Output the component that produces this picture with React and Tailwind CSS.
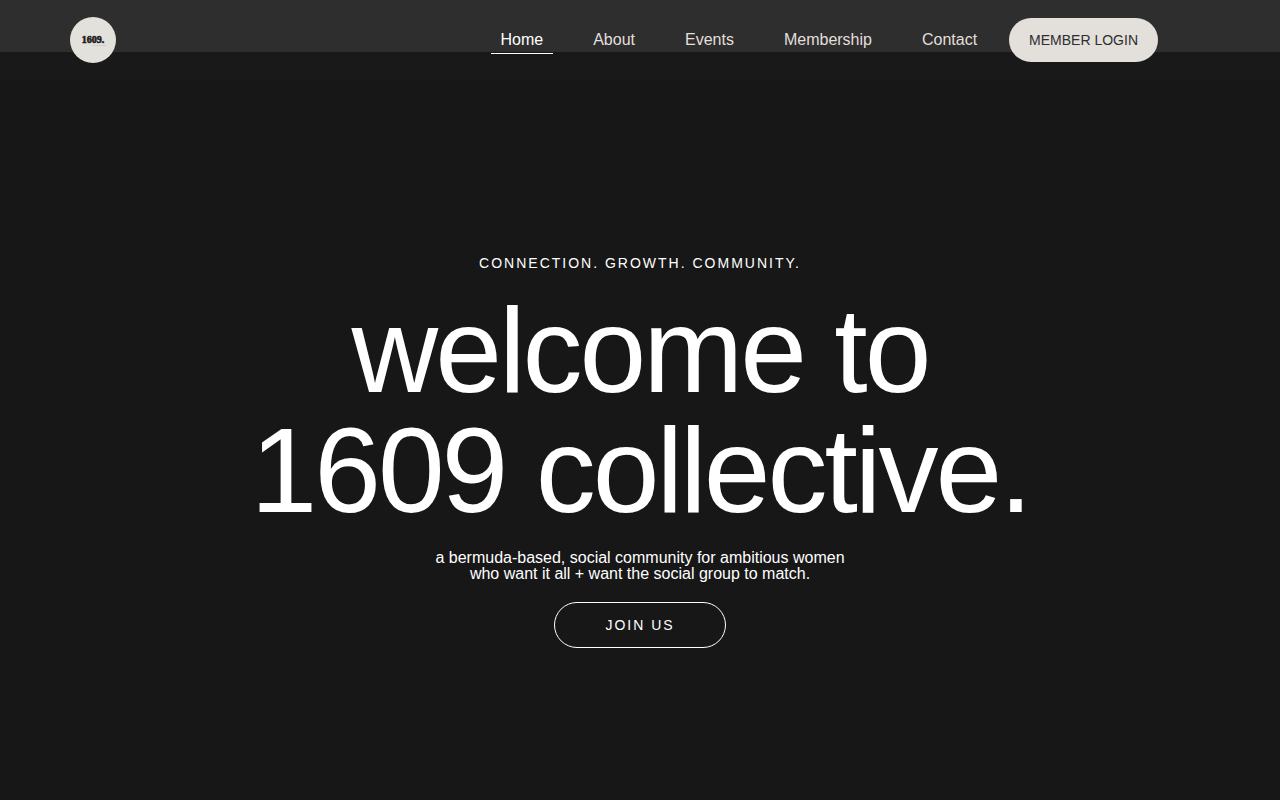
const links = ["Home", "About", "Events", "Membership", "Contact"];

function Logo() {
  return (
    <a
      href="#home"
      aria-label="1609 home"
      className="flex size-[46px] shrink-0 items-center justify-center rounded-full bg-[#e3e1dc]"
    >
      <svg width="46" height="46" viewBox="0 0 46 46" aria-hidden="true">
        <text
          x="23"
          y="26"
          textAnchor="middle"
          fontFamily="'Liberation Serif', serif"
          fontSize="10"
          fontWeight="700"
          fill="#1c1c1c"
          stroke="#1c1c1c"
          strokeWidth="0.6"
        >
          1609.
        </text>
        <path d="M22 28.5h14" stroke="#c4c2b8" strokeWidth="0.6" />
      </svg>
    </a>
  );
}

export default function App() {
  return (
    <div className="flex min-h-screen flex-col bg-[#171717] font-['Liberation_Sans',Arial,sans-serif] text-white">
      <header className="flex h-20 items-center justify-between bg-linear-to-b from-[#2e2e2e] from-65% to-[#191919] to-65% pr-[122px] pl-[70px]">
        <Logo />
        <div className="flex items-center gap-[22px]">
          <nav className="flex items-center gap-[30px] pt-0.5 text-base text-[#e3dfdb] antialiased">
            {links.map((label) => (
              <a
                key={label}
                href={`#${label.toLowerCase()}`}
                aria-current={label === "Home" ? "page" : undefined}
                className="border-b border-transparent px-[10px] pb-px aria-[current=page]:border-white aria-[current=page]:text-white"
              >
                {label}
              </a>
            ))}
          </nav>
          <a
            href="#login"
            className="flex h-11 items-center rounded-full bg-[#e3dfdb] px-5 text-sm whitespace-nowrap text-[#2e2e2e]"
          >
            MEMBER LOGIN
          </a>
        </div>
      </header>

      <main className="flex flex-col items-center pt-[173px] pb-10 text-center">
        <p className="text-sm tracking-[2px]">CONNECTION. GROWTH. COMMUNITY.</p>
        <h1 className="mt-[17px] text-[120px] leading-[120px] tracking-[-3px]">
          welcome to
          <br />
          1609 collective.
        </h1>
        <p className="mt-5 text-base leading-4">
          a bermuda-based, social community for ambitious women
          <br />
          who want it all + want the social group to match.
        </p>
        <a
          href="#join"
          className="mt-5 flex h-[46px] items-center rounded-full border border-white px-[50px] text-sm tracking-[2px]"
        >
          JOIN US
        </a>
      </main>
    </div>
  );
}
